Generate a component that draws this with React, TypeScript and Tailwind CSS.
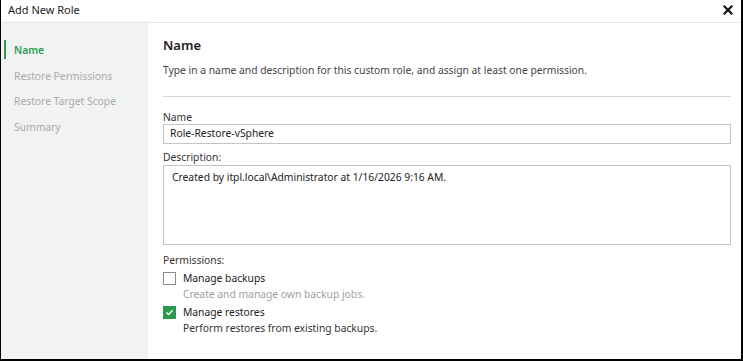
import React from 'react';

const steps = ['Name', 'Restore Permissions', 'Restore Target Scope', 'Summary'];

const App: React.FC = () => {
  return (
    <div
      className="w-[743px] h-[361px] bg-white border-l border-r-2 border-b-2 border-black flex flex-col text-[#333] overflow-hidden"
      style={{ fontFamily: '"Noto Sans", "Open Sans", sans-serif' }}
    >
      {/* title bar */}
      <div className="h-[23px] flex items-center justify-between pl-[7px] pr-[7px] border-b border-[#e6e6e6]">
        <span className="text-[11px] text-[#222] -mt-[2px]">Add New Role</span>
        <svg width="10" height="10" viewBox="0 0 10 10" className="mr-[1px] -mt-[2px]">
          <path d="M1.5 1.5 L8.5 8.5 M8.5 1.5 L1.5 8.5" stroke="#111" strokeWidth="2.2" strokeLinecap="square" />
        </svg>
      </div>

      <div className="flex flex-1 min-h-0">
        {/* sidebar */}
        <div className="w-[147px] bg-[#f1f2f2] pt-[15px] flex flex-col">
          {steps.map((s, i) => (
            <div key={s} className="relative h-[25.6px] flex items-center pl-[13px]">
              {i === 0 && <div className="absolute left-[3px] top-[2px] w-[2px] h-[19px] bg-[#2e9a4e]" />}
              <span className={i === 0 ? 'text-[10.3px] font-semibold text-[#2e9a4e]' : 'text-[10.3px] text-[#a9abab]'}>
                {s}
              </span>
            </div>
          ))}
        </div>

        {/* content */}
        <div className="flex-1 pl-[15px] pr-[10px] pt-[13px] flex flex-col">
          <h1 className="text-[13px] font-semibold text-[#222] leading-[18px]">Name</h1>
          <p className="mt-[9px] text-[10.3px] leading-[14px] text-[#444]">
            Type in a name and description for this custom role, and assign at least one permission.
          </p>
          <div className="mt-[19px] border-t border-[#d6d6d6]" />

          <label className="mt-[13px] text-[10.3px] leading-[14px] text-[#333]">Name</label>
          <div className="h-[20px] border border-[#c4c4c4] flex items-center px-[6px] text-[10.3px] text-[#222]">
            Role-Restore-vSphere
          </div>

          <label className="mt-[6px] text-[10.3px] leading-[14px] text-[#333]">Description:</label>
          <div className="mt-[1px] h-[80px] border border-[#c4c4c4] px-[8px] pt-[4px] text-[10.3px] leading-[14px] text-[#222]">
            Created by itpl.local\Administrator at 1/16/2026 9:16 AM.
          </div>

          <label className="mt-[8px] text-[10.3px] leading-[14px] text-[#333]">Permissions:</label>

          <div className="mt-[4px] flex items-center">
            <div className="w-[13px] h-[13px] border border-[#8a8a8a] bg-white" />
            <span className="ml-[7px] text-[10.3px] leading-[14px] text-[#222]">Manage backups</span>
          </div>
          <div className="ml-[20px] mt-[2px] text-[10.3px] leading-[14px] text-[#a0a0a0]">
            Create and manage own backup jobs.
          </div>

          <div className="mt-[4px] flex items-center">
            <div className="w-[13px] h-[13px] bg-[#2e9a4e] flex items-center justify-center">
              <svg width="9" height="9" viewBox="0 0 9 9">
                <path d="M1.5 4.6 L3.6 6.6 L7.6 2.2" stroke="#fff" strokeWidth="1.4" fill="none" />
              </svg>
            </div>
            <span className="ml-[7px] text-[10.3px] leading-[14px] text-[#222]">Manage restores</span>
          </div>
          <div className="ml-[20px] mt-[2px] text-[10.3px] leading-[14px] text-[#333]">
            Perform restores from existing backups.
          </div>
        </div>
      </div>
    </div>
  );
};

export default App;
